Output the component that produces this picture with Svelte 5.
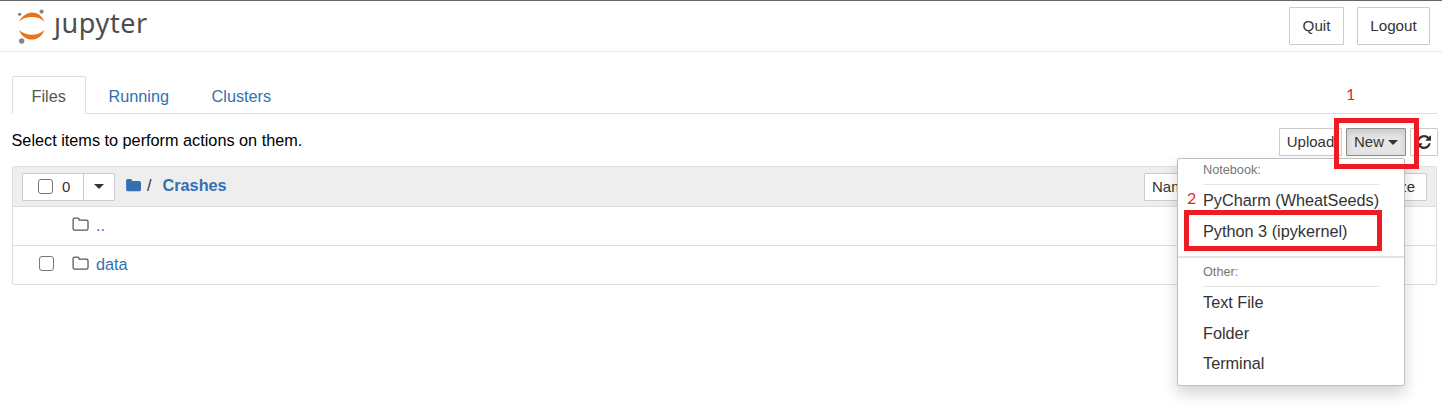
<script>
  const tabs = ['Files', 'Running', 'Clusters'];
  const folder = 'M1.1 2.6 Q1.1 1 2.7 1 H5.6 Q7.1 1 7.1 2.5 V3 H14 Q16 3 16 4.8 V11.6 Q16 13.2 14.4 13.2 H2.7 Q1.1 13.2 1.1 11.6 Z';
  const rows = [{ name: '..', check: false }, { name: 'data', check: true }];
</script>

<div class="page">
  <header>
    <div class="logo">
      <svg width="30" height="36" viewBox="0 0 30 36">
        <path d="M2 13.8 C5 7.2 11 4.4 15.2 4.4 C20 4.4 25.4 7.6 27.4 13.8 C24 10.5 20 9.1 15 9.1 C10 9.1 5.6 10.5 2 13.8Z" fill="#e8731a" />
        <path d="M2 22 C5.4 25.2 10 26.8 15 26.8 C20 26.8 24.2 25.2 27.4 22 C25 28.8 20 31.6 15 31.6 C9.6 31.6 4.6 28.8 2 22Z" fill="#e8731a" />
        <circle cx="24.6" cy="3.6" r="2.1" fill="#888" />
        <circle cx="2.6" cy="6.3" r="1.5" fill="#777" />
        <circle cx="4.7" cy="33" r="2.7" fill="#888" />
      </svg>
      <span class="word"><span class="jay">j</span>upyter</span>
    </div>
    <div class="actions"><button>Quit</button><button>Logout</button></div>
  </header>

  <nav>
    {#each tabs as t, i}<a class:active={i === 0}>{t}</a>{/each}
  </nav>

  <div class="toolbar">
    <span>Select items to perform actions on them.</span>
    <div class="tools">
      <button class="upload">Upload</button>
      <div class="anchor">
        <button class="new">New<i class="caret"></i></button>
        <div class="menu">
          <h6>Notebook:</h6>
          <p>PyCharm (WheatSeeds)</p>
          <p>Python 3 (ipykernel)</p>
          <div class="divider"></div>
          <h6>Other:</h6>
          <p>Text File</p>
          <p>Folder</p>
          <p>Terminal</p>
        </div>
        <div class="mark one"></div>
        <div class="mark two"></div>
        <span class="num n1">1</span>
        <span class="num n2">2</span>
      </div>
      <button class="refresh">
        <svg width="14" height="14" viewBox="0 0 1536 1536" fill="#333"><path d="M1511 928q0 5-1 7-64 268-268 434.500T764 1536q-146 0-282.500-55T238 1324l-129 129q-19 19-45 19t-45-19-19-45V960q0-26 19-45t45-19h448q26 0 45 19t19 45-19 45l-137 137q71 66 161 102t187 36q134 0 250-65t186-179q11-17 53-117 8-23 30-23h192q13 0 22.500 9.500T1511 928zm25-800v448q0 26-19 45t-45 19h-448q-26 0-45-19t-19-45 19-45l138-138Q969 256 768 256q-134 0-250 65T332 500q-11 17-53 117-8 23-30 23H50q-13 0-22.500-9.500T18 608v-7q65-268 270-434.500T768 0q146 0 284 55.500T1297 212l130-129q19-19 45-19t45 19 19 45z" /></svg>
      </button>
    </div>
  </div>

  <main>
    <div class="head">
      <div class="select"><span class="all"><i class="box"></i>0</span><span class="drop"><i class="caret"></i></span></div>
      <svg class="home" width="17" height="15" viewBox="0 0 17 15"><path d={folder} fill="#3470b1" /></svg>
      <span class="slash">/</span>
      <b>Crashes</b>
      <div class="sort"><button class="name">Nam</button><button class="size">File size</button></div>
    </div>
    {#each rows as r}
      <div class="row">
        <span class="slot">{#if r.check}<i class="box"></i>{/if}</span>
        <svg width="18" height="15" viewBox="0 0 18 15"><path d={folder} fill="none" stroke="#555" stroke-width="1.25" /></svg>
        <a>{r.name}</a>
      </div>
    {/each}
  </main>
</div>

<style>
  :global(body) { background: #fff; overflow: hidden; }
  .page { font: 16.25px/22px "Liberation Sans", Arial, sans-serif; color: #000; height: 411px; overflow: hidden; box-sizing: border-box; border-top: 1px solid #666; }
  .page * { box-sizing: border-box; }
  button { font: inherit; font-size: 15px; color: #333; background: #fff; border: 1px solid #ccc; border-radius: 1px; padding: 0; margin: 0; white-space: nowrap; }
  header { height: 51px; border-bottom: 1px solid #e7e7e7; display: flex; justify-content: space-between; padding: 6px 12px 0 17px; }
  .logo { display: flex; color: #4e4e4e; }
  .logo svg { margin-top: 1px; flex: none; }
  .word { font: 27px/36px "Noto Sans", sans-serif; margin-left: 7px; letter-spacing: 0.6px; margin-top: -2px; }
  .jay { display: inline-block; clip-path: inset(13px -6px -6px -6px); }
  .actions { display: flex; gap: 13px; }
  .actions button { height: 38px; width: 55px; font-size: 15.2px; }
  .actions button + button { width: 73px; }
  nav { display: flex; margin: 24px 5px 0 12px; height: 38px; border-bottom: 1px solid #ddd; gap: 3px; }
  nav a { height: 38px; padding: 8px 19px 0 18.5px; color: #3470b1; border: 1px solid transparent; }
  nav a.active { color: #555; background: #fff; border-color: #ddd #ddd #fff; border-radius: 2px 2px 0 0; width: 74px; }
  .toolbar { display: flex; justify-content: space-between; padding: 14px 4px 0 11.5px; height: 52px; }
  .toolbar > span { line-height: 24px; }
  .tools { display: flex; gap: 4px; }
  .tools button { height: 28px; display: flex; align-items: center; justify-content: center; }
  .upload { width: 63px; }
  .anchor { position: relative; z-index: 2; }
  .tools .new { width: 60px; background: #e6e6e6; border-color: #8c8c8c; box-shadow: inset 0 4px 6px rgba(0, 0, 0, .125); gap: 4px; }
  .refresh { width: 28px; }
  .caret { display: inline-block; border: 5px solid transparent; border-top-color: currentColor; border-bottom: 0; }
  .menu { position: absolute; right: 1px; top: 30px; width: 228px; height: 228px; background: #fff; border: 1px solid #bfbfbf; border-radius: 2px; box-shadow: 0 7px 15px rgba(0, 0, 0, .18); color: #333; }
  h6 { margin: 0 25px 0; height: 26px; font: 12.7px/22px "Liberation Sans", Arial, sans-serif; color: #777; border-bottom: 1px solid #e5e5e5; }
  .menu p { margin: 0 0 0 25px; line-height: 30.5px; white-space: nowrap; }
  .divider { height: 2px; background: #e5e5e5; margin: 10px 0 3px; }
  .mark { position: absolute; border: 5px solid #ed1c24; }
  .one { left: -12px; top: -10px; width: 85px; height: 51px; }
  .two { left: -162px; top: 82px; width: 198px; height: 41px; }
  .num { position: absolute; color: #ed1c24; font: 16px/20px Lato, sans-serif; }
  .n1 { left: 0; top: -44px; }
  .n2 { left: -159px; top: 60px; }
  main { margin: 0 5px 0 12px; border: 1px solid #ddd; border-radius: 2px; }
  .head { height: 40px; background: #eee; border-bottom: 1px solid #ddd; display: flex; align-items: center; padding: 0 9px; color: #333; }
  .select { width: 93px; height: 28px; display: flex; border: 1px solid #ccc; background: #fff; border-radius: 1px; font-size: 15px; }
  .all { width: 61px; border-right: 1px solid #ccc; display: flex; align-items: center; padding-left: 15px; gap: 9px; }
  .drop { flex: 1; display: flex; align-items: center; justify-content: center; }
  .box { width: 15px; height: 15px; border: 1px solid #767676; border-radius: 3px; background: #fff; flex: none; display: block; }
  .home { margin: -3px 0 0 10px; }
  .slash { margin: -3px 0 0 5px; }
  b { color: #3470b1; margin: -3px 0 0 11px; }
  .sort { margin-left: auto; display: flex; }
  .sort button { height: 28px; }
  .name { width: 38px; text-align: left; padding-left: 7px; }
  .size { width: 90px; margin-left: 155px; text-align: right; padding-right: 11px; }
  .row { height: 38px; display: flex; align-items: center; padding: 0 0 3px 26px; }
  .row + .row { height: 39px; border-top: 1px solid #ddd; }
  .slot { width: 33px; }
  .row a { color: #3470b1; margin-left: 6px; }
</style>
